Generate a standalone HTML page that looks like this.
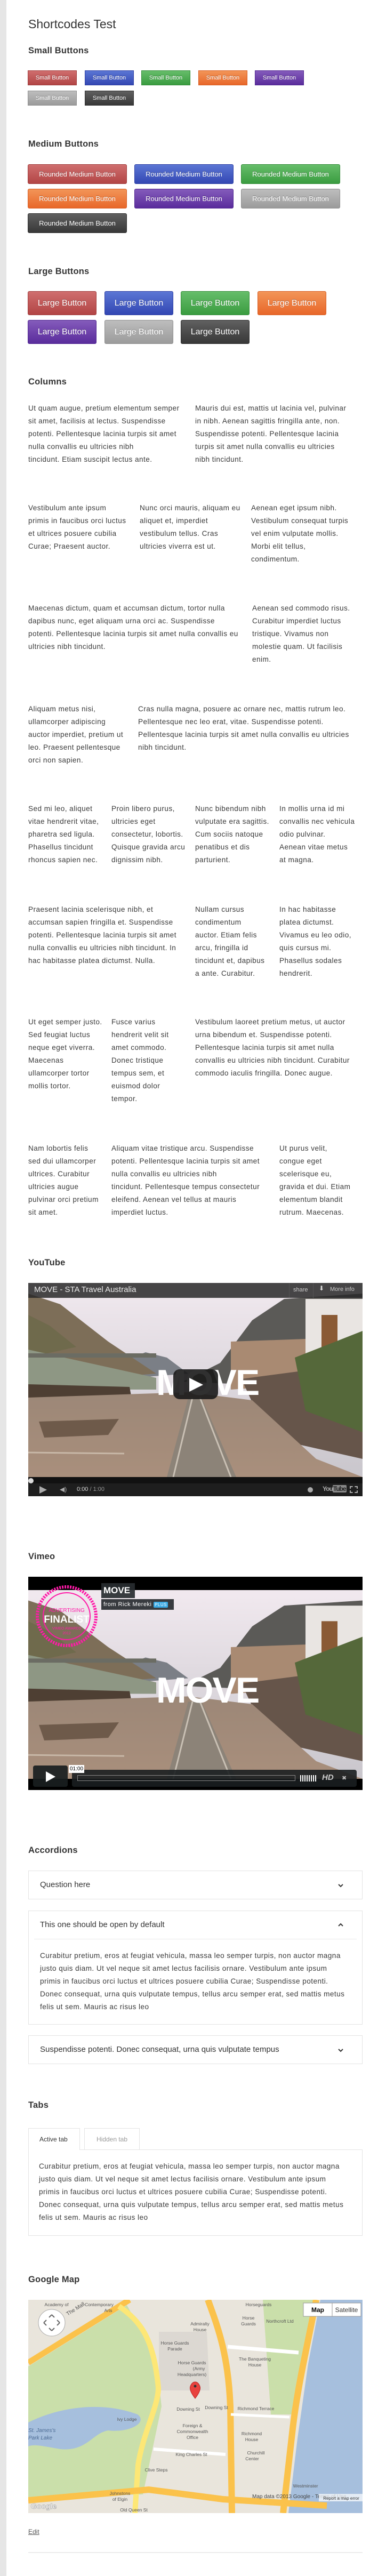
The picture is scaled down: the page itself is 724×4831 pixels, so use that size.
<!DOCTYPE html>
<html><head><meta charset="utf-8">
<style>
*{margin:0;padding:0;box-sizing:border-box}
html,body{width:724px;height:4831px;background:#fff;overflow:hidden}
body{position:relative;font-family:"Liberation Sans",sans-serif;color:#333}
.side{position:absolute;left:0;top:0;width:12px;height:4831px;background:#e6e6e6}
.a{position:absolute}
h1{position:absolute;left:53px;top:31px;font-size:23px;font-weight:normal;color:#333;line-height:28px}
h2{position:absolute;left:53px;font-size:16.5px;font-weight:bold;color:#333;line-height:20px;letter-spacing:.2px}
.btn{position:absolute;color:#fff;text-align:center;text-shadow:0 -1px 0 rgba(0,0,0,.3);border:1px solid}
.s{width:92px;height:28px;line-height:26px;font-size:11px}
.m{width:186px;height:37px;line-height:35px;font-size:13px;border-radius:3px}
.l{width:129px;height:45px;line-height:43px;font-size:16px;border-radius:3px}
.red{background:linear-gradient(#cf6e6e,#b24545);border-color:#a03c3c}
.blue{background:linear-gradient(#5b76d4,#3347b3);border-color:#2d3fa3}
.green{background:linear-gradient(#66bd6a,#3a9c40);border-color:#338c38}
.orange{background:linear-gradient(#f29558,#e8672a);border-color:#d85d22}
.purple{background:linear-gradient(#845bbb,#5a2c9c);border-color:#4f2590}
.grey{background:linear-gradient(#bdbdbd,#9b9b9b);border-color:#8f8f8f}
.dark{background:linear-gradient(#606060,#383838);border-color:#2e2e2e}
.p{position:absolute;font-size:13.6px;line-height:24px;white-space:nowrap;color:#3a3a3a;letter-spacing:.45px}
.acc{position:absolute;left:53px;width:627px;border:1px solid #e3e3e3;background:#fff}
.acc .h{position:absolute;left:21px;font-size:15px;color:#333;white-space:nowrap}
.chev{position:absolute;right:34px;width:12px;height:8px}
</style></head><body>
<div class="side"></div>
<h1>Shortcodes Test</h1>

<h2 style="top:85px">Small Buttons</h2>
<div class="btn s red" style="left:52px;top:132px">Small Button</div>
<div class="btn s blue" style="left:159px;top:132px">Small Button</div>
<div class="btn s green" style="left:265px;top:132px">Small Button</div>
<div class="btn s orange" style="left:372px;top:132px">Small Button</div>
<div class="btn s purple" style="left:478px;top:132px">Small Button</div>
<div class="btn s grey" style="left:52px;top:170px">Small Button</div>
<div class="btn s dark" style="left:159px;top:170px">Small Button</div>

<h2 style="top:260px">Medium Buttons</h2>
<div class="btn m red" style="left:52px;top:308px">Rounded Medium Button</div>
<div class="btn m blue" style="left:252px;top:308px">Rounded Medium Button</div>
<div class="btn m green" style="left:452px;top:308px">Rounded Medium Button</div>
<div class="btn m orange" style="left:52px;top:354px">Rounded Medium Button</div>
<div class="btn m purple" style="left:252px;top:354px">Rounded Medium Button</div>
<div class="btn m grey" style="left:452px;top:354px">Rounded Medium Button</div>
<div class="btn m dark" style="left:52px;top:400px">Rounded Medium Button</div>

<h2 style="top:499px">Large Buttons</h2>
<div class="btn l red" style="left:52px;top:546px">Large Button</div>
<div class="btn l blue" style="left:196px;top:546px">Large Button</div>
<div class="btn l green" style="left:339px;top:546px">Large Button</div>
<div class="btn l orange" style="left:483px;top:546px">Large Button</div>
<div class="btn l purple" style="left:52px;top:600px">Large Button</div>
<div class="btn l grey" style="left:196px;top:600px">Large Button</div>
<div class="btn l dark" style="left:339px;top:600px">Large Button</div>

<h2 style="top:706px">Columns</h2>
<div class="p" style="left:53px;top:754px">Ut quam augue, pretium elementum semper<br>sit amet, facilisis at lectus. Suspendisse<br>potenti. Pellentesque lacinia turpis sit amet<br>nulla convallis eu ultricies nibh<br>tincidunt. Etiam suscipit lectus ante.</div>
<div class="p" style="left:366px;top:754px">Mauris dui est, mattis ut lacinia vel, pulvinar<br>in nibh. Aenean sagittis fringilla ante, non.<br>Suspendisse potenti. Pellentesque lacinia<br>turpis sit amet nulla convallis eu ultricies<br>nibh tincidunt.</div>

<div class="p" style="left:53px;top:941px">Vestibulum ante ipsum<br>primis in faucibus orci luctus<br>et ultrices posuere cubilia<br>Curae; Praesent auctor.</div>
<div class="p" style="left:262px;top:941px">Nunc orci mauris, aliquam eu<br>aliquet et, imperdiet<br>vestibulum tellus. Cras<br>ultricies viverra est ut.</div>
<div class="p" style="left:471px;top:941px">Aenean eget ipsum nibh.<br>Vestibulum consequat turpis<br>vel enim vulputate mollis.<br>Morbi elit tellus,<br>condimentum.</div>

<div class="p" style="left:53px;top:1129px">Maecenas dictum, quam et accumsan dictum, tortor nulla<br>dapibus nunc, eget aliquam urna orci ac. Suspendisse<br>potenti. Pellentesque lacinia turpis sit amet nulla convallis eu<br>ultricies nibh tincidunt.</div>
<div class="p" style="left:473px;top:1129px">Aenean sed commodo risus.<br>Curabitur imperdiet luctus<br>tristique. Vivamus non<br>molestie quam. Ut facilisis<br>enim.</div>

<div class="p" style="left:53px;top:1318px">Aliquam metus nisi,<br>ullamcorper adipiscing<br>auctor imperdiet, pretium ut<br>leo. Praesent pellentesque<br>orci non sapien.</div>
<div class="p" style="left:259px;top:1318px">Cras nulla magna, posuere ac ornare nec, mattis rutrum leo.<br>Pellentesque nec leo erat, vitae. Suspendisse potenti.<br>Pellentesque lacinia turpis sit amet nulla convallis eu ultricies<br>nibh tincidunt.</div>

<div class="p" style="left:53px;top:1505px">Sed mi leo, aliquet<br>vitae hendrerit vitae,<br>pharetra sed ligula.<br>Phasellus tincidunt<br>rhoncus sapien nec.</div>
<div class="p" style="left:209px;top:1505px">Proin libero purus,<br>ultricies eget<br>consectetur, lobortis.<br>Quisque gravida arcu<br>dignissim nibh.</div>
<div class="p" style="left:366px;top:1505px">Nunc bibendum nibh<br>vulputate era sagittis.<br>Cum sociis natoque<br>penatibus et dis<br>parturient.</div>
<div class="p" style="left:524px;top:1505px">In mollis urna id mi<br>convallis nec vehicula<br>odio pulvinar.<br>Aenean vitae metus<br>at magna.</div>

<div class="p" style="left:53px;top:1694px">Praesent lacinia scelerisque nibh, et<br>accumsan sapien fringilla et. Suspendisse<br>potenti. Pellentesque lacinia turpis sit amet<br>nulla convallis eu ultricies nibh tincidunt. In<br>hac habitasse platea dictumst. Nulla.</div>
<div class="p" style="left:366px;top:1694px">Nullam cursus<br>condimentum<br>auctor. Etiam felis<br>arcu, fringilla id<br>tincidunt et, dapibus<br>a ante. Curabitur.</div>
<div class="p" style="left:524px;top:1694px">In hac habitasse<br>platea dictumst.<br>Vivamus eu leo odio,<br>quis cursus mi.<br>Phasellus sodales<br>hendrerit.</div>

<div class="p" style="left:53px;top:1905px">Ut eget semper justo.<br>Sed feugiat luctus<br>neque eget viverra.<br>Maecenas<br>ullamcorper tortor<br>mollis tortor.</div>
<div class="p" style="left:209px;top:1905px">Fusce varius<br>hendrerit velit sit<br>amet commodo.<br>Donec tristique<br>tempus sem, et<br>euismod dolor<br>tempor.</div>
<div class="p" style="left:366px;top:1905px">Vestibulum laoreet pretium metus, ut auctor<br>urna bibendum et. Suspendisse potenti.<br>Pellentesque lacinia turpis sit amet nulla<br>convallis eu ultricies nibh tincidunt. Curabitur<br>commodo iaculis fringilla. Donec augue.</div>

<div class="p" style="left:53px;top:2142px">Nam lobortis felis<br>sed dui ullamcorper<br>ultrices. Curabitur<br>ultricies augue<br>pulvinar orci pretium<br>sit amet.</div>
<div class="p" style="left:209px;top:2142px">Aliquam vitae tristique arcu. Suspendisse<br>potenti. Pellentesque lacinia turpis sit amet<br>nulla convallis eu ultricies nibh<br>tincidunt. Pellentesque tempus consectetur<br>eleifend. Aenean vel tellus at mauris<br>imperdiet luctus.</div>
<div class="p" style="left:524px;top:2142px">Ut purus velit,<br>congue eget<br>scelerisque eu,<br>gravida et dui. Etiam<br>elementum blandit<br>rutrum. Maecenas.</div>

<svg width="0" height="0" style="position:absolute">
<defs>
<linearGradient id="sky" x1="0" y1="0" x2="0" y2="1"><stop offset="0" stop-color="#f1e9ef"/><stop offset="1" stop-color="#c9c6cc"/></linearGradient>
<linearGradient id="gr" x1="0" y1="0" x2="0" y2="1"><stop offset="0" stop-color="#9c8777"/><stop offset="1" stop-color="#a98f7c"/></linearGradient>
<symbol id="scene" viewBox="0 0 627 364" preserveAspectRatio="none">
<rect width="627" height="364" fill="url(#sky)"/>
<polygon points="170,150 220,130 260,140 300,170 170,180" fill="#7b7f86"/>
<polygon points="0,20 60,40 150,110 240,170 0,190" fill="#7d6e58"/>
<polygon points="0,60 40,80 90,120 0,140" fill="#6f6a4c"/>
<polygon points="290,185 360,150 420,70 480,30 627,20 627,200" fill="#5b5a57"/>
<polygon points="0,125 240,178 240,200 0,200" fill="#8e9784"/>
<rect x="0" y="132" width="240" height="8" fill="#6b6c63"/>
<polygon points="0,190 190,195 200,250 0,260" fill="#4e3f33"/>
<polygon points="380,110 520,105 520,190 380,200" fill="#a98a72"/>
<rect x="520" y="30" width="107" height="140" fill="#e9e5e2"/>
<rect x="550" y="60" width="30" height="90" fill="#8a5a35"/>
<polygon points="400,180 627,150 627,330 450,290" fill="#66554a"/>
<polygon points="500,140 627,90 627,280 520,240" fill="#55683a"/>
<polygon points="0,215 300,205 420,220 540,330 627,364 0,364" fill="url(#gr)"/>
<polygon points="20,260 170,255 150,285 30,290" fill="#6e5a4a"/>
<polygon points="300,215 325,215 390,364 260,364" fill="#8c8378"/>
<line x1="308" y1="215" x2="272" y2="364" stroke="#c9c0b4" stroke-width="3"/>
<line x1="322" y1="215" x2="380" y2="364" stroke="#c9c0b4" stroke-width="3"/>
<line x1="0" y1="318" x2="180" y2="320" stroke="#c8b8a8" stroke-width="3"/>
</symbol>
</defs></svg>

<h2 style="top:2358px">YouTube</h2>
<div class="a" style="left:53px;top:2406px;width:627px;height:400px;background:#1b1b1b;overflow:hidden">
<svg class="a" style="left:0;top:0" width="627" height="364"><use href="#scene"/></svg>
<div class="a" style="left:0;top:0;width:627px;height:28px;background:rgba(40,40,40,.85)"></div>
<div class="a" style="left:11px;top:4px;color:#eee;font-size:15px;white-space:nowrap">MOVE - STA Travel Australia</div>
<div class="a" style="left:489px;top:0;width:1px;height:28px;background:#555"></div>
<div class="a" style="left:497px;top:7px;color:#ccc;font-size:11px">share</div>
<div class="a" style="left:534px;top:0;width:1px;height:28px;background:#555"></div>
<div class="a" style="left:545px;top:3px;color:#ddd;font-size:12px">&#x2B07;</div>
<div class="a" style="left:566px;top:6px;color:#ccc;font-size:11px">More info</div>
<div class="a" style="left:240px;top:152px;color:#fff;font-size:68px;font-weight:bold;line-height:70px;letter-spacing:-2px">MOVE</div>
<div class="a" style="left:272px;top:162px;width:84px;height:56px;border-radius:12px;background:rgba(25,25,25,.9)"></div>
<svg class="a" style="left:300px;top:176px" width="30" height="30"><polygon points="2,2 28,15 2,28" fill="#fff"/></svg>
<div class="a" style="left:0;top:364px;width:627px;height:12px;background:#111"></div>
<div class="a" style="left:0;top:366px;width:10px;height:10px;border-radius:50%;background:#ddd"></div>
<div class="a" style="left:0;top:376px;width:627px;height:24px;background:#1e1e1e"></div>
<svg class="a" style="left:21px;top:381px" width="14" height="14"><polygon points="0,0 14,7 0,14" fill="#aaa"/></svg>
<div class="a" style="left:59px;top:380px;color:#aaa;font-size:12px">&#x25C0;)</div>
<div class="a" style="left:91px;top:381px;color:#ddd;font-size:11px">0:00 <span style="color:#999">/ 1:00</span></div>
<div class="a" style="left:524px;top:383px;width:10px;height:10px;border-radius:50%;background:#aaa"></div>
<div class="a" style="left:552px;top:379px;color:#aaa;font-size:12px;font-weight:bold;letter-spacing:-1px">You<span style="background:#888;color:#222;border-radius:2px;padding:0 1px">Tube</span></div>
<div class="a" style="left:603px;top:381px;width:15px;height:13px;border:2px dashed #aaa"></div>
</div>

<h2 style="top:2909px">Vimeo</h2>
<div class="a" style="left:53px;top:2957px;width:627px;height:400px;background:#000;overflow:hidden">
<svg class="a" style="left:0;top:25px" width="627" height="354"><use href="#scene"/></svg>
<svg class="a" style="left:12px;top:14px" width="120" height="120"><circle cx="60" cy="60" r="55" fill="none" stroke="#ff1aa8" stroke-width="6" stroke-dasharray="3 2"/><circle cx="60" cy="60" r="44" fill="none" stroke="#ff1aa8" stroke-width="2"/><text x="60" y="52" text-anchor="middle" font-family="Liberation Sans" font-size="10" fill="#ff1aa8">ADVERTISING</text><text x="60" y="72" text-anchor="middle" font-family="Liberation Sans" font-size="19" font-weight="bold" fill="#fff">FINALIST</text><text x="60" y="85" text-anchor="middle" font-family="Liberation Sans" font-size="7" fill="#ff1aa8">VIMEO AWARDS</text><text x="60" y="94" text-anchor="middle" font-family="Liberation Sans" font-size="7" fill="#ff1aa8">2012</text></svg>
<div class="a" style="left:137px;top:12px;width:63px;height:28px;background:rgba(40,45,48,.92);color:#fff;font-size:17px;font-weight:bold;line-height:28px;padding-left:4px">MOVE</div>
<div class="a" style="left:137px;top:42px;width:136px;height:20px;background:rgba(40,45,48,.92);color:#fff;font-size:11px;line-height:20px;padding-left:4px;white-space:nowrap;letter-spacing:.5px">from Rick Mereki <span style="background:#39a9e4;font-size:8px;padding:1px 2px;border-radius:2px">PLUS</span></div>
<div class="a" style="left:240px;top:178px;color:#fff;font-size:68px;font-weight:bold;line-height:70px;letter-spacing:-2px">MOVE</div>
<div class="a" style="left:9px;top:354px;width:65px;height:40px;border-radius:4px;background:rgba(25,30,32,.92)"></div>
<svg class="a" style="left:33px;top:365px" width="18" height="20"><polygon points="0,0 18,10 0,20" fill="#fff"/></svg>
<div class="a" style="left:82px;top:362px;width:534px;height:32px;border-radius:4px;background:rgba(25,30,32,.9)"></div>
<div class="a" style="left:92px;top:372px;width:409px;height:11px;border:1px solid #888"></div>
<div class="a" style="left:76px;top:353px;background:#fff;color:#000;font-size:10px;padding:0 2px;line-height:15px">01:00</div>
<div class="a" style="left:510px;top:372px;width:30px;height:12px;background:repeating-linear-gradient(90deg,#fff 0 2px,transparent 2px 4px)"></div>
<div class="a" style="left:551px;top:368px;color:#ccc;font-size:15px;font-weight:bold;font-style:italic">HD</div>
<div class="a" style="left:588px;top:371px;color:#bbb;font-size:11px">&#x2716;</div>
</div>

<h2 style="top:3460px">Accordions</h2>
<div class="acc" style="top:3508px;height:54px"><div class="h" style="top:17px">Question here</div>
<svg class="chev" style="top:23px" viewBox="0 0 12 8"><polyline points="2,2 6,6 10,2" fill="none" stroke="#333" stroke-width="2"/></svg></div>
<div class="acc" style="top:3583px;height:214px"><div class="h" style="top:17px">This one should be open by default</div>
<svg class="chev" style="top:22px" viewBox="0 0 12 8"><polyline points="2,6 6,2 10,6" fill="none" stroke="#333" stroke-width="2"/></svg>
<div class="a" style="left:10px;right:10px;top:52px;height:1px;background:#e8e8e8"></div>
<div class="p" style="left:21px;top:72px">Curabitur pretium, eros at feugiat vehicula, massa leo semper turpis, non auctor magna<br>justo quis diam. Ut vel neque sit amet lectus facilisis ornare. Vestibulum ante ipsum<br>primis in faucibus orci luctus et ultrices posuere cubilia Curae; Suspendisse potenti.<br>Donec consequat, urna quis vulputate tempus, tellus arcu semper erat, sed mattis metus<br>felis ut sem. Mauris ac risus leo</div></div>
<div class="acc" style="top:3817px;height:54px"><div class="h" style="top:17px">Suspendisse potenti. Donec consequat, urna quis vulputate tempus</div>
<svg class="chev" style="top:23px" viewBox="0 0 12 8"><polyline points="2,2 6,6 10,2" fill="none" stroke="#333" stroke-width="2"/></svg></div>

<h2 style="top:3938px">Tabs</h2>
<div class="a" style="left:53px;top:4031px;width:627px;height:162px;border:1px solid #e3e3e3"></div>
<div class="a" style="left:53px;top:3991px;width:97px;height:41px;border:1px solid #e3e3e3;border-bottom:none;background:#fff;font-size:12px;line-height:40px;padding-left:20px;color:#333">Active tab</div>
<div class="a" style="left:158px;top:3991px;width:104px;height:40px;border:1px solid #e3e3e3;border-bottom:none;font-size:12px;line-height:40px;text-align:center;color:#999">Hidden tab</div>
<div class="p" style="left:73px;top:4051px">Curabitur pretium, eros at feugiat vehicula, massa leo semper turpis, non auctor magna<br>justo quis diam. Ut vel neque sit amet lectus facilisis ornare. Vestibulum ante ipsum<br>primis in faucibus orci luctus et ultrices posuere cubilia Curae; Suspendisse potenti.<br>Donec consequat, urna quis vulputate tempus, tellus arcu semper erat, sed mattis metus<br>felis ut sem. Mauris ac risus leo</div>

<h2 style="top:4265px">Google Map</h2>
<svg class="a" style="left:53px;top:4313px" width="627" height="400" viewBox="0 0 627 400" font-family="Liberation Sans">
<rect width="627" height="400" fill="#e9e5dc"/>
<polygon points="0,125 185,10 240,110 250,200 215,365 0,370" fill="#cadfaa"/>
<polygon points="245,60 335,60 340,170 245,170" fill="#dcd8d2"/>
<path d="M0,230 C60,200 140,190 205,215 C225,230 190,250 150,245 C120,250 110,285 60,280 C30,275 10,270 0,275 Z" fill="#a6bfdd"/>
<polygon points="440,0 540,0 505,215 455,215" fill="#cadfaa"/>
<polygon points="548,0 627,0 627,400 488,400 505,260 525,120" fill="#a6bfdd"/>
<path d="M0,118 L190,0" stroke="#fbc24b" stroke-width="11"/>
<path d="M170,12 C210,40 235,70 244,165 C244,200 215,250 206,310 L200,400" fill="none" stroke="#fde776" stroke-width="10"/>
<path d="M337,0 C355,50 375,100 379,200 L382,400" fill="none" stroke="#fbc24b" stroke-width="12"/>
<path d="M540,0 C525,80 505,160 495,250 L478,400" fill="none" stroke="#fbc24b" stroke-width="12"/>
<path d="M0,376 L226,356 L365,374 L560,386" fill="none" stroke="#fbc24b" stroke-width="12"/>
<path d="M374,88 L507,99" stroke="#fff" stroke-width="7"/>
<path d="M235,280 L370,290" stroke="#fff" stroke-width="6"/>
<path d="M380,215 L490,220" stroke="#fff" stroke-width="5"/>
<g font-size="8.5" fill="#555" text-anchor="middle">
<text x="53" y="12">Academy of</text><text x="133" y="12">Contemporary</text><text x="150" y="23">Arts</text>
<text x="322" y="48">Admiralty</text><text x="322" y="59">House</text>
<text x="275" y="84">Horse Guards</text><text x="275" y="95">Parade</text>
<text x="307" y="121">Horse Guards</text><text x="320" y="132">(Army</text><text x="307" y="143">Headquarters)</text>
<text x="432" y="12">Horseguards</text>
<text x="413" y="37">Horse</text><text x="413" y="48">Guards</text>
<text x="472" y="43">Northcroft Ltd</text>
<text x="425" y="114">The Banqueting</text><text x="425" y="125">House</text>
<text x="300" y="208">Downing St</text>
<text x="353" y="205">Downing St</text>
<text x="427" y="207">Richmond Terrace</text>
<text x="185" y="227">Ivy Lodge</text>
<text x="308" y="239">Foreign &amp;</text><text x="308" y="250">Commonwealth</text><text x="308" y="261">Office</text>
<text x="419" y="254">Richmond</text><text x="419" y="265">House</text>
<text x="306" y="293">King Charles St</text>
<text x="427" y="290">Churchill</text><text x="420" y="301">Center</text>
<text x="240" y="322">Clive Steps</text>
<text x="172" y="366">Johnstons</text><text x="172" y="377">of Elgin</text>
<text x="520" y="352">Westminster</text>
<text x="198" y="397">Old Queen St</text>
</g>
<g font-size="10" fill="#444"><text x="420" y="372">Map data ©2013 Google - Terms of Use</text></g>
<rect x="545" y="364" width="82" height="14" fill="rgba(255,255,255,.7)"/>
<text x="587" y="375" font-size="8" fill="#333" text-anchor="middle">Report a map error</text>
<text x="74" y="30" font-size="10" fill="#555" transform="rotate(-32 74 30)">The Mall</text>
<text x="0" y="248" font-size="10" fill="#4b6a93" font-style="italic">St. James's</text>
<text x="0" y="262" font-size="10" fill="#4b6a93" font-style="italic">Park Lake</text>
<text x="5" y="392" font-size="14" font-weight="bold" fill="#fff" stroke="#888" stroke-width=".5">Google</text>
<path d="M313,185 C303,172 302,165 305,160 C309,152 317,152 321,160 C324,165 323,172 313,185 Z" fill="#e8423d" stroke="#b22" stroke-width="1"/>
<circle cx="313" cy="162" r="2.5" fill="#333"/>
<circle cx="44" cy="43" r="25" fill="#fff" stroke="#aaa"/>
<path d="M44,28 l-5,5 M44,28 l5,5 M44,58 l-5,-5 M44,58 l5,-5 M29,43 l5,-5 M29,43 l5,5 M59,43 l-5,-5 M59,43 l-5,5" stroke="#666" stroke-width="2"/>
<rect x="516" y="6" width="54" height="25" fill="#fff" stroke="#999"/>
<rect x="570" y="6" width="54" height="25" fill="#fff" stroke="#999"/>
<text x="543" y="23" font-size="12" font-weight="bold" fill="#000" text-anchor="middle">Map</text>
<text x="597" y="23" font-size="12" fill="#333" text-anchor="middle">Satellite</text>
</svg>

<div class="a" style="left:53px;top:4741px;font-size:12px;color:#555;text-decoration:underline">Edit</div>
<div class="a" style="left:53px;top:4786px;width:627px;height:2px;background:#ececec"></div>
</body></html>
